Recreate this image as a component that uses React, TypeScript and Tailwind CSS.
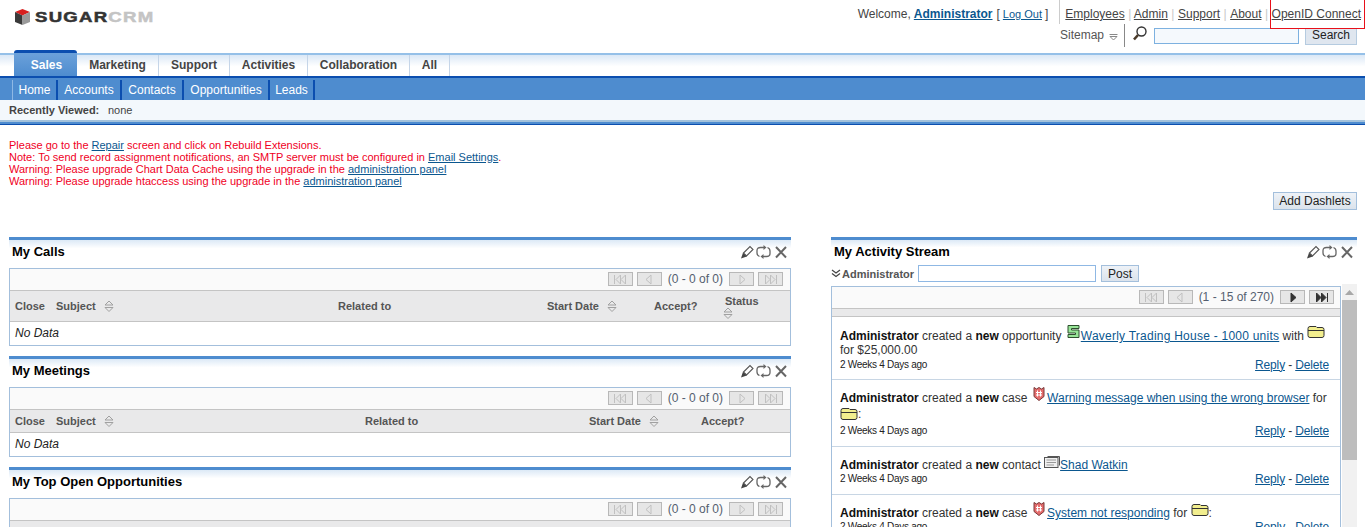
import React from "react";

const EditIcons = () => (
  <div className="flex items-center">
    <svg width="14" height="14" viewBox="0 0 14 14" fill="none">
      <path d="M3.5 8 L10 1.5 L13 4.5 L6.5 11 Z" stroke="#555" strokeWidth="1.1" />
      <path d="M1 13.5 L3 7.8 L6.8 11.5 Z" fill="#444" />
    </svg>
    <svg width="15" height="14" viewBox="0 0 15 14" fill="none" stroke="#666" strokeWidth="1.3" className="ml-[2px]">
      <path d="M3.5 11.5 Q1 10.5 1 8 V5.5 Q1 2.5 4.5 2.5 H8" />
      <path d="M7.5 0 L10.5 2.5 L7.5 5 Z" fill="#666" stroke="none" />
      <path d="M11.5 2.5 Q14 3.5 14 6 V8.5 Q14 11.5 10.5 11.5 H7" />
      <path d="M7.5 9 L4.5 11.5 L7.5 14 Z" fill="#666" stroke="none" />
    </svg>
    <svg width="12" height="14" viewBox="0 0 12 14" fill="none" stroke="#666" strokeWidth="2" className="ml-[4px]">
      <path d="M1 2 L11 12.5 M11 2 L1 12.5" />
    </svg>
  </div>
);

const Sort = () => (
  <svg width="10" height="12" viewBox="0 0 10 12" fill="none" stroke="#a0a0a0" strokeWidth="1">
    <path d="M1 5 L5 1 L9 5 Z" />
    <path d="M1 7.5 L9 7.5 L5 11.5 Z" />
  </svg>
);

const PageBtn = ({ kind, on }: { kind: "first" | "prev" | "next" | "last"; on?: boolean }) => {
  const c = on ? "#333" : "#c0c0c0";
  const f = on ? "#333" : "none";
  return (
    <div className="w-[25px] h-[14px] bg-[#e6e6e6] border border-[#b8b8b8] flex items-center justify-center">
      <svg width="16" height="11" viewBox="0 0 16 11" stroke={c} strokeWidth="1" fill={f}>
        {kind === "first" && (
          <>
            <path d="M2.5 1 V10" />
            <path d="M8.5 1 L4 5.5 L8.5 10 Z" />
            <path d="M13.5 1 L9 5.5 L13.5 10 Z" />
          </>
        )}
        {kind === "prev" && <path d="M10 1 L5 5.5 L10 10 Z" />}
        {kind === "next" && <path d="M6 1 L11 5.5 L6 10 Z" />}
        {kind === "last" && (
          <>
            <path d="M2.5 1 L7 5.5 L2.5 10 Z" />
            <path d="M7.5 1 L12 5.5 L7.5 10 Z" />
            <path d="M13.5 1 V10" />
          </>
        )}
      </svg>
    </div>
  );
};

const Pager = ({ text, next, className }: { text: string; next?: boolean; className: string }) => (
  <div className={`h-[22px] pb-[1px] bg-[#fafafa] border-b border-[#c4c4c4] flex items-center justify-end gap-[4px] ${className}`}>
    <PageBtn kind="first" />
    <PageBtn kind="prev" />
    <span className="text-[12px] text-[#555f70] mx-[2px]">{text}</span>
    <PageBtn kind="next" on={next} />
    <PageBtn kind="last" on={next} />
  </div>
);

const DashHead = ({ title, h }: { title: string; h: string }) => (
  <div className={`border-t-[3px] border-[#4e8ccf] bg-linear-to-b from-[#dce9f6] to-white to-[30%] ${h}`}>
    <div className="flex justify-between items-center pl-[3px] pr-[4px] pt-[4px]">
      <span className="text-[13px] leading-[15px] font-bold text-black">{title}</span>
      <EditIcons />
    </div>
  </div>
);

const Th = ({ children, sort }: { children: string; sort?: boolean }) => (
  <div className="flex items-center gap-[8px] text-[11px] font-bold text-[#555]">
    <span>{children}</span>
    {sort && <Sort />}
  </div>
);

const NoData = () => (
  <div className="h-[23px] flex items-center pl-[5px] pb-[2px] text-[12px] italic text-[#222]">No Data</div>
);

const Box = ({ children }: { children: React.ReactNode }) => (
  <div className="border border-[#a3bfdc] bg-white">{children}</div>
);

const Money = () => (
  <svg width="13" height="13" viewBox="0 0 13 13" className="inline-block -my-[6px] relative -top-[5px] mr-[1px]">
    <path d="M1 0.5 H12 V3.5 H4.5 V5 H12 V12.5 H1 V9.5 H8.5 V8 H1 Z" fill="#97e597" stroke="#2f4f2f" strokeWidth="1" />
  </svg>
);

const Case = () => (
  <svg width="12" height="14" viewBox="0 0 12 14" className="inline-block -my-[6px] relative -top-[5px]">
    <path d="M1 0.5 L3.5 2 L6 0.5 L8.5 2 L11 0.5 V9.5 L6 13.5 L1 9.5 Z" fill="#e56c6c" stroke="#7a3a3a" strokeWidth="1" />
    <path d="M4.5 3.5 V9.5 M7.5 3.5 V9.5 M3 5.5 H9 M3 8 H9" stroke="#fff" strokeWidth="1" />
  </svg>
);

const Folder = ({ className }: { className: string }) => (
  <svg width="18" height="12" viewBox="0 0 18 12" className={`inline-block -my-[6px] relative ${className}`}>
    <path d="M1 2.5 Q1 0.5 3 0.5 H9 L10 1.5 H15 Q17 1.5 17 3.5 V9.5 Q17 11.5 15 11.5 H3 Q1 11.5 1 9.5 Z" fill="#f2ee8e" stroke="#333" strokeWidth="1" />
    <path d="M1 4.5 H17" stroke="#333" strokeWidth="1" />
  </svg>
);

const Contact = () => (
  <svg width="16" height="13" viewBox="0 0 16 13" className="inline-block -my-[6px] relative -top-[3px]">
    <path d="M3.5 0.5 H15.5 V9.5" fill="none" stroke="#555" />
    <rect x="0.5" y="1.5" width="13.5" height="10" fill="#f0f0f0" stroke="#555" />
    <path d="M2.5 4 H12 M2.5 6.5 H12 M2.5 9 H10" stroke="#999" />
  </svg>
);

const L = ({ children, className = "" }: { children: React.ReactNode; className?: string }) => (
  <a href="#" className={`text-[#0b578f] underline ${className}`}>{children}</a>
);

const Admin = () => <b className="text-[#111]">Administrator</b>;

const Foot = () => (
  <div className="flex justify-between items-center h-[15px] pr-[3px]">
    <span className="text-[10px] tracking-[-0.28px] text-[#222]">2 Weeks 4 Days ago</span>
    <span className="text-[12px] tracking-[-0.15px] text-[#333]">
      <L>Reply</L> - <L>Delete</L>
    </span>
  </div>
);

const Line = ({ children, className = "" }: { children: React.ReactNode; className?: string }) => (
  <div className={`h-[14px] leading-[14px] text-[12px] text-[#333] whitespace-nowrap ${className}`}>{children}</div>
);

const tabs = [
  { t: "Marketing", w: "w-[82px]" },
  { t: "Support", w: "w-[71px]" },
  { t: "Activities", w: "w-[78px]" },
  { t: "Collaboration", w: "w-[102px]" },
  { t: "All", w: "w-[40px]" },
];
const subs = [
  { t: "Home", w: "w-[46px]" },
  { t: "Accounts", w: "w-[64px]" },
  { t: "Contacts", w: "w-[62px]" },
  { t: "Opportunities", w: "w-[86px]" },
  { t: "Leads", w: "w-[45px]" },
];

const TopLink = ({ children, className = "" }: { children: string; className?: string }) => (
  <a href="#" className={`text-[#444] underline ${className}`}>{children}</a>
);
const Sep = () => <span className="text-[#c8c8c8] mx-[3.5px]">|</span>;

export default function App() {
  return (
    <div className="relative h-[527px] w-[1365px] overflow-hidden bg-white font-['Liberation_Sans',sans-serif] text-[12px] text-[#444]">
      <div className="absolute top-[-1px] left-[1270px] w-[95px] h-[30px] border border-[#e8101a]" />

      <header className="h-[53px] flex justify-between">
        <div className="flex items-start pl-[15px] pt-[9px] gap-[5px]">
          <svg width="15" height="16" viewBox="0 0 15 16">
            <path d="M7.5 0 L15 3 L7.5 6.5 L0 3 Z" fill="#d8201f" />
            <path d="M0 3 L7.5 6.5 V16 L0 13 Z" fill="#3a3a3a" />
            <path d="M15 3 L7.5 6.5 V16 L15 13 Z" fill="#9a9a9a" />
          </svg>
          <span className="mt-[-1px] origin-left scale-x-[1.24] text-[15px] leading-[18px] font-bold tracking-[1px] [-webkit-text-stroke:0.5px]">
            <span className="text-[#333]">SUGAR</span>
            <span className="text-[#c4c4c4]">CRM</span>
          </span>
        </div>
        <div className="flex flex-col items-end">
          <div className="h-[24px] flex items-start pr-[4px]">
            <div className="flex items-center h-[28px]">
              <span>Welcome, </span>
              <a href="#" className="font-bold text-[#0b578f] underline ml-[3px]">Administrator</a>
              <span className="ml-[4px]">[</span>
              <a href="#" className="text-[11px] text-[#0b578f] underline mx-[3px]">Log Out</a>
              <span>]</span>
            </div>
            <div className="w-[1px] h-[24px] bg-[#ccc] ml-[11px] mr-[5px]" />
            <div className="flex items-center h-[28px]">
              <TopLink>Employees</TopLink>
              <Sep />
              <TopLink className="-ml-[1px]">Admin</TopLink>
              <Sep />
              <TopLink>Support</TopLink>
              <Sep />
              <TopLink>About</TopLink>
              <Sep />
              <TopLink>OpenID Connect</TopLink>
            </div>
          </div>
          <div className="h-[24px] flex items-start pr-[8px]">
            <span className="text-[#555] mt-[2px]">Sitemap</span>
            <svg width="9" height="7" viewBox="0 0 9 7" fill="none" stroke="#888" className="ml-[5px] mt-[10px]">
              <path d="M0.5 0.5 H8.5 M1 2.5 H8 L4.5 6 Z" />
            </svg>
            <div className="w-[1px] h-[23px] bg-[#888] ml-[6px] mr-[7px]" />
            <svg width="15" height="15" viewBox="0 0 15 15" fill="none" className="mt-[2px]">
              <circle cx="9.5" cy="5.5" r="4.5" stroke="#333" strokeWidth="1.4" />
              <path d="M6 9 L2 13.5" stroke="#4a3a2a" strokeWidth="2.6" />
            </svg>
            <input className="w-[145px] h-[16px] ml-[7px] mt-[4px] border border-[#7db1e0] bg-[#f5f9fd]" />
            <button className="w-[52px] h-[17px] ml-[6px] mt-[4px] pb-[2px] border border-[#b5cbe0] bg-[#dfe6ef] text-[12px] leading-[13px] text-[#222]">Search</button>
          </div>
        </div>
      </header>

      <nav className="h-[25px] border-t-2 border-b-2 border-t-[#95c0e8] border-b-[#0b4eaf] bg-linear-to-b from-[#dbe8f6] to-white to-[55%] flex pl-[14px] text-[12px] font-bold text-[#444]">
        <a href="#" className="h-[26px] -mt-[5px] w-[63px] pl-[2px] flex items-center justify-center rounded-t-[3px] border-t-[3px] border-[#0b4eaf] bg-linear-to-b from-[#6ba1da] to-[#4e8ccf] text-white">Sales</a>
        {tabs.map((t) => (
          <a key={t.t} href="#" className={`h-[21px] pb-[2px] flex items-center justify-center border-r border-[#c5d5e8] ${t.w}`}>{t.t}</a>
        ))}
      </nav>

      <div className="h-[22px] bg-[#4e8ccf] flex pl-[12px] text-[12px] text-white">
        {subs.map((s, i) => (
          <a key={s.t} href="#" className={`h-[20px] mt-[2px] flex items-center justify-center border-r-2 border-[#0b4eaf] ${s.w} ${i === 0 ? "border-l border-l-[#8fb8e4]" : ""}`}>{s.t}</a>
        ))}
      </div>

      <div className="h-[20px] pt-[1px] bg-[#f3f8fc] flex items-center pl-[9px] text-[11px] text-[#444]">
        <b className="w-[99px]">Recently Viewed:</b>
        <span>none</span>
      </div>
      <div className="h-[5px] border-t-2 border-b border-t-[#a3c2dc] border-b-[#0b4eaf] bg-[#4e8ccf]" />

      <main className="pl-[9px] pr-[8px] pt-[14px]">
        <div className="h-[48px] text-[11px] leading-[12px] text-[#f0001e]">
          <div>Please go to the <L>Repair</L> screen and click on Rebuild Extensions.</div>
          <div>Note: To send record assignment notifications, an SMTP server must be configured in <L>Email Settings</L>.</div>
          <div>Warning: Please upgrade Chart Data Cache using the upgrade in the <L>administration panel</L></div>
          <div>Warning: Please upgrade htaccess using the upgrade in the <L>administration panel</L></div>
        </div>
        <div className="flex justify-end mt-[5px] mb-[27px]">
          <button className="w-[84px] h-[18px] border border-[#a3bfdc] bg-linear-to-b from-[#eef2f7] to-[#dbe3ec] text-[12px] leading-[14px] text-[#222]">Add Dashlets</button>
        </div>

        <div className="flex gap-[40px] items-start">
          <div className="w-[782px] flex flex-col gap-[10px]">
            <section>
              <DashHead title="My Calls" h="h-[31px]" />
              <Box>
                <Pager text="(0 - 0 of 0)" className="pr-[7px]" />
                <div className="h-[31px] bg-[#e9e9ea] border-b border-[#c4c4c4] grid grid-cols-[41px_282px_209px_107px_71px_1fr] items-center pl-[5px]">
                  <Th>Close</Th>
                  <Th sort>Subject</Th>
                  <Th>Related to</Th>
                  <Th sort>Start Date</Th>
                  <Th>Accept?</Th>
                  <div className="flex flex-col items-start mt-[1px] -ml-[2px] text-[11px] font-bold text-[#555] leading-[12px]">
                    <span className="ml-[2px]">Status</span>
                    <Sort />
                  </div>
                </div>
                <NoData />
              </Box>
            </section>

            <section>
              <DashHead title="My Meetings" h="h-[31px]" />
              <Box>
                <Pager text="(0 - 0 of 0)" className="pr-[7px]" />
                <div className="h-[23px] bg-[#e9e9ea] border-b border-[#c4c4c4] grid grid-cols-[41px_309px_224px_112px_1fr] items-center pl-[5px]">
                  <Th>Close</Th>
                  <Th sort>Subject</Th>
                  <Th>Related to</Th>
                  <Th sort>Start Date</Th>
                  <Th>Accept?</Th>
                </div>
                <NoData />
              </Box>
            </section>

            <section>
              <DashHead title="My Top Open Opportunities" h="h-[31px]" />
              <Box>
                <Pager text="(0 - 0 of 0)" className="pr-[7px]" />
                <div className="h-[23px] bg-[#e9e9ea] border-b border-[#c4c4c4]" />
              </Box>
            </section>
          </div>

          <section className="w-[526px]">
            <DashHead title="My Activity Stream" h="h-[28px]" />
            <div className="h-[17px] flex items-center mb-[4px]">
              <svg width="10" height="9" viewBox="0 0 10 9" fill="none" stroke="#444" strokeWidth="1.2">
                <path d="M1 1 L5 4 L9 1 M1 4.5 L5 7.5 L9 4.5" />
              </svg>
              <b className="ml-[1px] pt-[1px] text-[11px] text-[#555]">Administrator</b>
              <input className="w-[178px] h-[17px] ml-[4px] border border-[#8fb8e4] bg-white" />
              <button className="w-[38px] h-[17px] ml-[5px] border border-[#a3bfdc] bg-linear-to-b from-[#eef2f7] to-[#dbe3ec] text-[12px] leading-[14px] text-[#222]">Post</button>
            </div>
            <div className="flex items-start gap-[1px]">
              <div className="w-[510px] border border-[#a3bfdc] bg-white">
                <Pager text="(1 - 15 of 270)" next className="pr-[6px]" />
                <div className="h-[8px] bg-[#e9e9ea] border-b border-[#c4c4c4]" />

                <div className="px-[8px] pt-[12px] pb-[7px] border-b border-[#c8d6e4]">
                  <Line>
                    <Admin /> created a <b className="text-[#111]">new</b> opportunity <span className="ml-[2px]"><Money /></span><L className="tracking-[0.24px]">Waverly Trading House - 1000 units</L> with <Folder className="-top-[5px]" />
                  </Line>
                  <Line>for $25,000.00</Line>
                  <Foot />
                </div>

                <div className="px-[8px] pt-[11px] pb-[8px] border-b border-[#c8d6e4]">
                  <Line>
                    <Admin /> created a <b className="text-[#111]">new</b> case <span className="ml-[2px]"><Case /></span> <L className="-ml-[1px]">Warning message when using the wrong browser</L> for
                  </Line>
                  <Line className="mt-[2px] mb-[2px]"><Folder className="-top-[1px]" />:</Line>
                  <Foot />
                </div>

                <div className="px-[8px] pt-[11px] pb-[8px] border-b border-[#c8d6e4]">
                  <Line className="-mb-[1px]">
                    <Admin /> created a <b className="text-[#111]">new</b> contact <Contact /><L>Shad Watkin</L>
                  </Line>
                  <Foot />
                </div>

                <div className="px-[8px] pt-[11px] pb-[8px]">
                  <Line className="-mb-[1px]">
                    <Admin /> created a <b className="text-[#111]">new</b> case <span className="ml-[2px]"><Case /></span> <L className="-ml-[1px]">System not responding</L> for <Folder className="-top-[4px]" />:
                  </Line>
                  <Foot />
                </div>
              </div>

              <div className="w-[15px] h-[260px] -mt-[2px] bg-[#f1f1f1] flex flex-col items-center">
                <svg width="9" height="5" viewBox="0 0 9 5" className="mt-[6px] mb-[5px]">
                  <path d="M0 5 L4.5 0 L9 5 Z" fill="#a8a8a8" />
                </svg>
                <div className="w-[15px] h-[160px] bg-[#bdbdbd]" />
              </div>
            </div>
          </section>
        </div>
      </main>
    </div>
  );
}
